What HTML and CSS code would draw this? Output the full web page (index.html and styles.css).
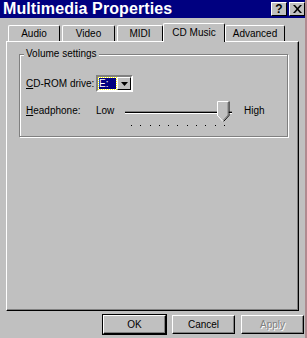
FILE: index.html
```html
<!DOCTYPE html>
<html lang="en">
<head>
  <meta charset="UTF-8">
  <title>Multimedia Properties</title>
  <link rel="stylesheet" href="styles.css">
</head>
<body>
  <div class="window">
    <div class="titlebar">
      <span class="title">Multimedia Properties</span>
      <div class="caption-btns">
        <span class="cap-btn">?</span>
        <span class="cap-btn">
          <svg width="9" height="8" viewBox="0 0 9 8"><path d="M0 0h2l2.5 2.7L7 0h2L5.5 4 9 8H7L4.5 5.3 2 8H0l3.5-4z" fill="#000"/></svg>
        </span>
      </div>
    </div>

    <div class="tabs">
      <div class="tab">Audio</div>
      <div class="tab">Video</div>
      <div class="tab">MIDI</div>
      <div class="tab active">CD Music</div>
      <div class="tab">Advanced</div>
    </div>

    <div class="panel">
      <div class="group">
        <span class="legend">Volume settings</span>
        <div class="row drive-row">
          <span class="lbl"><u>C</u>D-ROM drive:</span>
          <div class="combo">
            <span class="combo-value"><span class="sel">E:</span></span>
            <span class="combo-arrow">
              <svg width="7" height="4" viewBox="0 0 7 4"><path d="M0 0h7L3.5 4z" fill="#000"/></svg>
            </span>
          </div>
        </div>
        <div class="row slider-row">
          <span class="lbl"><u>H</u>eadphone:</span>
          <span class="low">Low</span>
          <div class="slider">
            <div class="track"></div>
            <svg class="thumb" width="13" height="21" viewBox="0 0 13 21">
              <path d="M0.5 0.5h11v14l-5.5 6l-5.5-6z" fill="#c0c0c0"/>
              <path d="M0.5 15V0.5H12" fill="none" stroke="#fff"/>
              <path d="M12 0.5V14.5L6.5 20.5" fill="none" stroke="#000"/>
              <path d="M11 1.5V14L6 19.5" fill="none" stroke="#808080"/>
              <path d="M0.5 14.5L6 20.5" fill="none" stroke="#fff"/>
            </svg>
            <div class="ticks">
              <i></i><i></i><i></i><i></i><i></i><i></i><i></i><i></i><i></i><i></i><i></i>
            </div>
          </div>
          <span class="high">High</span>
        </div>
      </div>
    </div>

    <div class="buttons">
      <button class="btn default">OK</button>
      <button class="btn">Cancel</button>
      <button class="btn disabled">Apply</button>
    </div>
  </div>
</body>
</html>
```

FILE: styles.css
```css
body { margin: 0; background: #c0c0c0; font-family: 'Liberation Sans', Arial, sans-serif; font-size: 10px; color: #000; }
.window { width: 307px; height: 338px; background: #c0c0c0; border-right: 2px solid #b08a90; box-sizing: border-box; }

.titlebar { height: 18px; background: #000080; display: flex; align-items: center; justify-content: space-between; padding: 0 0 0 3px; }
.title { color: #fff; font-weight: bold; font-size: 16px; letter-spacing: 0.1px; }
.caption-btns { display: flex; gap: 2px; }
.cap-btn { width: 16px; height: 14px; box-sizing: border-box; background: #c0c0c0; border: 1px solid; border-color: #fff #000 #000 #fff; display: flex; align-items: center; justify-content: center; font-weight: bold; font-size: 12px; }

.tabs { display: flex; align-items: flex-end; padding: 4px 0 0 8px; height: 19px; }
.tab { height: 16px; box-sizing: border-box; padding: 2px 0 0; text-align: center; border: 1px solid; border-bottom: none; border-color: #fff #000 #fff #fff; border-radius: 2px 2px 0 0; margin-right: 2px; }
.tab:nth-child(1) { width: 52px; }
.tab:nth-child(2) { width: 53px; }
.tab:nth-child(3) { width: 46px; }
.tab:nth-child(5) { width: 60px; }
.tab.active { width: 62px; height: 19px; margin: 0 0 -1px -2px; position: relative; z-index: 1; background: #c0c0c0; padding-top: 3px; }

.panel { margin: 0 6px 0 6px; height: 270px; box-sizing: border-box; border: 1px solid; border-color: #fff #000 #000 #fff; box-shadow: inset -1px -1px 0 #808080; padding: 12px 0 0 12px; }

.group { position: relative; width: 269px; height: 83px; box-sizing: border-box; border: 1px solid #808080; box-shadow: 1px 1px 0 #fff, inset 1px 1px 0 #fff; padding: 20px 0 0 6px; }
.legend { position: absolute; top: -7px; left: 4px; background: #c0c0c0; padding: 0 2px; }

.row { display: flex; align-items: center; }
.lbl { width: 70px; }
.drive-row { height: 17px; }
.combo { width: 37px; height: 17px; box-sizing: border-box; border: 2px solid; border-color: #808080 #fff #fff #808080; background: #fff; display: flex; }
.combo-value { flex: 1; padding: 1px; }
.sel { display: block; width: 17px; height: 11px; background: #000080; color: #fff; line-height: 11px; outline: 1px dotted #ff0; }
.combo-arrow { width: 15px; box-sizing: border-box; background: #c0c0c0; border: 1px solid; border-color: #fff #000 #000 #fff; display: flex; align-items: center; justify-content: center; }

.slider-row { margin-top: 13px; height: 28px; align-items: flex-start; }
.low { width: 29px; }
.high { margin-left: 12px; }
.slider { position: relative; width: 107px; height: 28px; }
.track { margin-top: 6px; border-top: 1px solid #808080; border-bottom: 1px solid #fff; background: #000; height: 1px; }
.thumb { position: absolute; left: 92px; top: -4px; }
.ticks { display: flex; justify-content: space-between; width: 94px; margin: 11px 0 0 6px; }
.ticks i { display: block; width: 1px; height: 1px; background: #000; }

.buttons { display: flex; justify-content: flex-end; gap: 6px; padding: 4px 1px 0 0; }
.btn { width: 63px; height: 19px; font-family: inherit; font-size: 10px; background: #c0c0c0; border: 1px solid; border-color: #fff #000 #000 #fff; box-shadow: inset -1px -1px 0 #808080; padding: 0; color: #000; }
.btn.default { outline: 1px solid #000; }
.btn.disabled { color: #808080; text-shadow: 1px 1px 0 #fff; }
```
